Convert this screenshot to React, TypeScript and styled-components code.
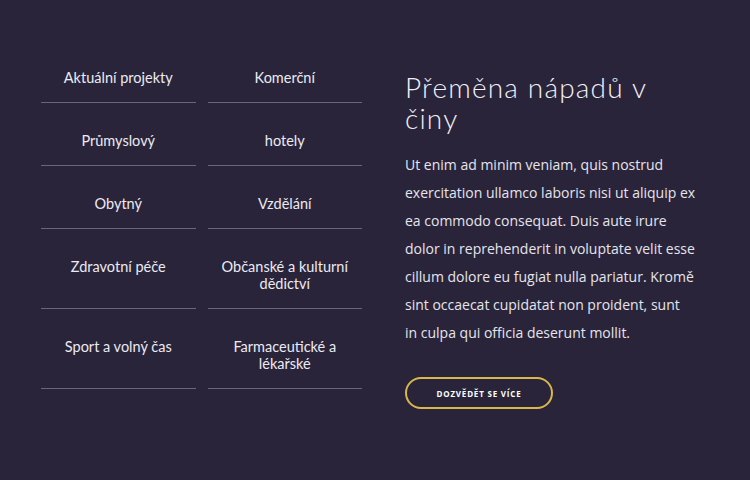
import React from 'react'
import styled, { createGlobalStyle } from 'styled-components'

const GlobalStyle = createGlobalStyle`
  html, body {
    margin: 0;
    padding: 0;
    background: #29243a;
  }
`

const Page = styled.div`
  width: 750px;
  height: 480px;
  box-sizing: border-box;
  padding: 40px 41px;
  display: flex;
  gap: 43px;
  background: #29243a;
  color: #ebe9f0;
`

const Grid = styled.div`
  width: 321px;
  display: grid;
  grid-template-columns: 1fr 1fr;
  column-gap: 12px;
  align-content: start;
`

const Item = styled.div`
  padding: 29px 6px 16px;
  border-bottom: 1px solid #6a657c;
  text-align: center;
  font-family: 'Lato', sans-serif;
  font-size: 14.5px;
  line-height: 17px;
  color: #eceaf2;
`

const Content = styled.div`
  width: 290.25px;
  padding-top: 32px;
`

const Heading = styled.h2`
  width: 260px;
  margin: 0 0 17px;
  font-family: 'Lato', sans-serif;
  font-weight: 300;
  font-size: 28px;
  letter-spacing: 1.2px;
  line-height: 31px;
  color: #f2f0f6;
`

const Text = styled.p`
  margin: 0 0 30px;
  font-family: 'Open Sans', sans-serif;
  font-size: 14px;
  line-height: 28px;
  color: #e6e4ec;
`

const Button = styled.button`
  width: 148px;
  height: 32px;
  border: 2px solid #d9b84a;
  border-radius: 16px;
  background: transparent;
  color: #ffffff;
  font-family: 'Open Sans', sans-serif;
  font-weight: 700;
  font-size: 8px;
  letter-spacing: 0.8px;
  text-transform: uppercase;
  cursor: pointer;
`

const items = [
  'Aktuální projekty',
  'Komerční',
  'Průmyslový',
  'hotely',
  'Obytný',
  'Vzdělání',
  'Zdravotní péče',
  'Občanské a kulturní dědictví',
  'Sport a volný čas',
  'Farmaceutické a lékařské',
]

const App = () => {
  return (
    <>
      <GlobalStyle />
      <Page>
        <Grid>
          {items.map((label) => (
            <Item key={label}>{label}</Item>
          ))}
        </Grid>
        <Content>
          <Heading>Přeměna nápadů v činy</Heading>
          <Text>
            Ut enim ad minim veniam, quis nostrud exercitation ullamco laboris nisi ut aliquip ex ea
            commodo consequat. Duis aute irure dolor in reprehenderit in voluptate velit esse cillum
            dolore eu fugiat nulla pariatur. Kromě sint occaecat cupidatat non proident, sunt in
            culpa qui officia deserunt mollit.
          </Text>
          <Button>Dozvědět se více</Button>
        </Content>
      </Page>
    </>
  )
}

export default App
